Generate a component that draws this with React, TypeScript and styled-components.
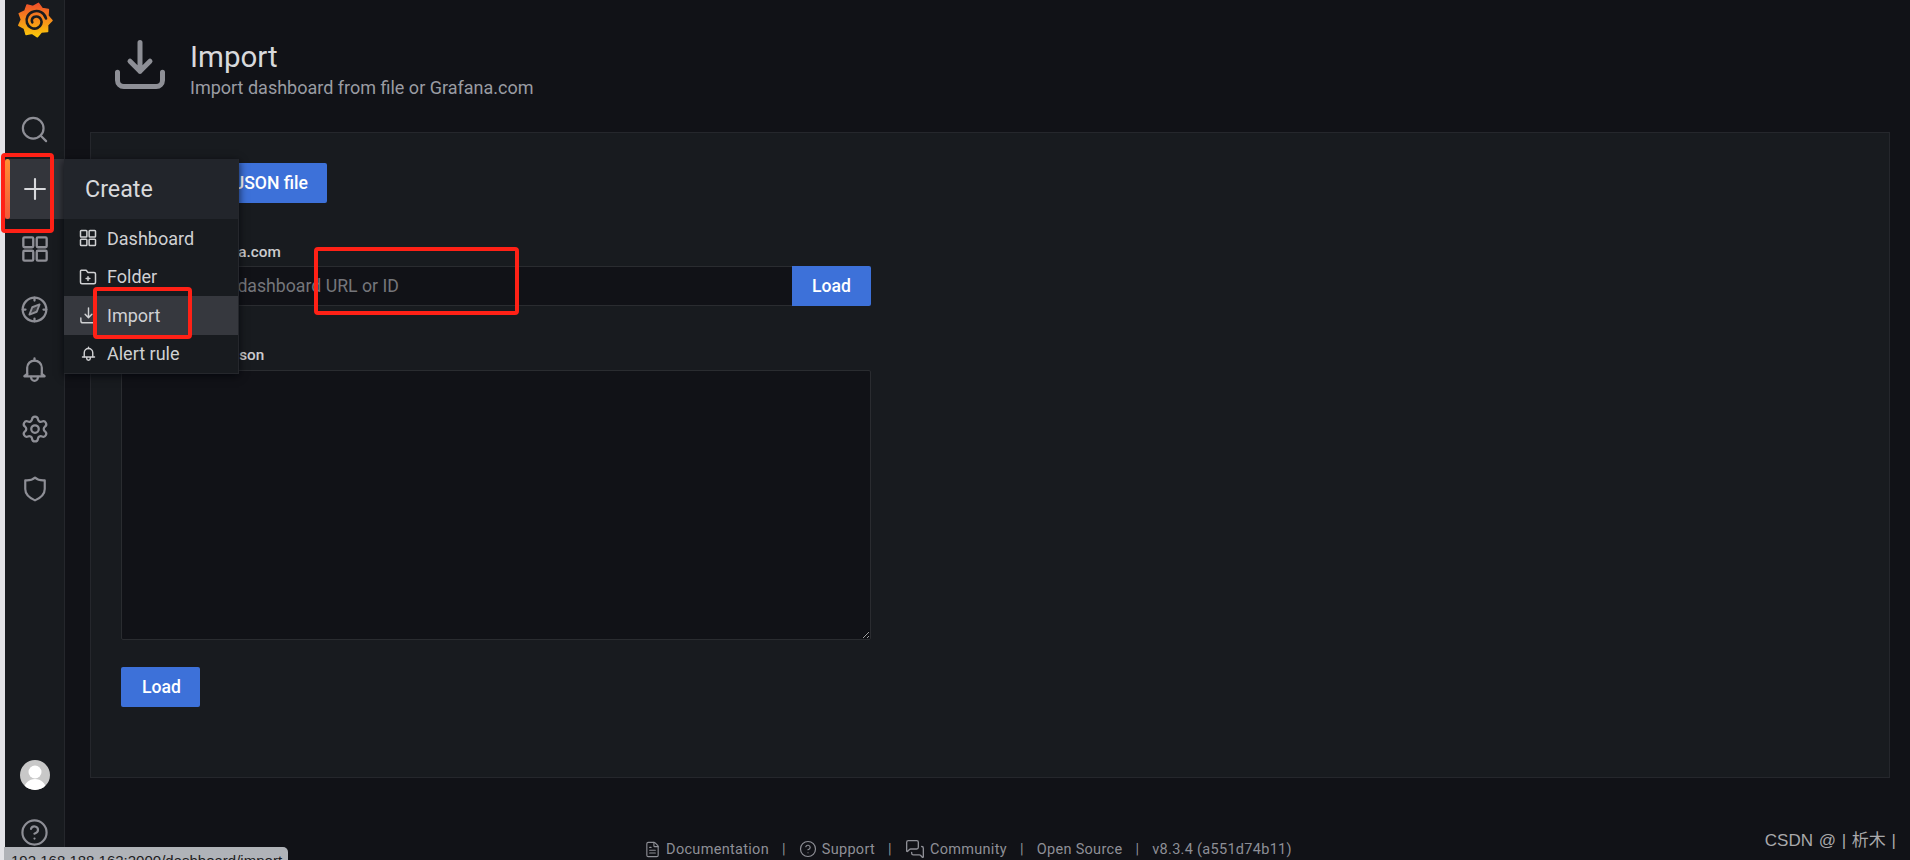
import React from "react";
import styled, { createGlobalStyle } from "styled-components";
import { Search, Plus, Settings, HelpCircle, MessagesSquare, FileText, Upload } from "lucide-react";

const GlobalStyle = createGlobalStyle`
  html, body {
    margin: 0;
    padding: 0;
    background: #111217;
    overflow: hidden;
  }
  * {
    box-sizing: border-box;
  }
`;

const Page = styled.div`
  position: relative;
  display: flex;
  width: 1910px;
  height: 860px;
  overflow: hidden;
  background: #111217;
  font-family: Roboto, "Liberation Sans", sans-serif;
  color: #d0d1d3;
`;

const Strip = styled.div`
  width: 5px;
  background: #e3e3e7;
`;

const Sidebar = styled.nav`
  width: 60px;
  display: flex;
  flex-direction: column;
  background: #181b1f;
  border-right: 1px solid #25272c;
`;

const LogoSlot = styled.div`
  height: 99px;
  display: flex;
  justify-content: center;
  padding-top: 2px;
`;

const NavRow = styled.div<{ $active?: boolean }>`
  position: relative;
  height: 60px;
  display: flex;
  align-items: center;
  justify-content: center;
  color: #8e8f96;
  background: ${(p) => (p.$active ? "#33353b" : "transparent")};
  ${(p) => (p.$active ? "color: #d8d9dc;" : "")}
`;

const ActiveBar = styled.span`
  position: absolute;
  left: 0;
  top: 0;
  bottom: 0;
  width: 5px;
  border-radius: 3px;
  background: linear-gradient(#ff8f33, #f2583a);
`;

const BottomNav = styled.div`
  margin-top: auto;
  display: flex;
  flex-direction: column;
`;

const BottomRow = styled.div<{ $height: number }>`
  height: ${(p) => p.$height}px;
  display: flex;
  align-items: center;
  justify-content: center;
  color: #8e8f96;
`;

const Avatar = styled.div`
  width: 30px;
  height: 30px;
  border-radius: 50%;
  overflow: hidden;
  background: #c8c8c8;
`;

const Main = styled.main`
  flex: 1;
  display: flex;
  flex-direction: column;
  padding: 0 20px 0 25px;
`;

const Header = styled.header`
  height: 132px;
  display: flex;
  align-items: flex-start;
  gap: 25px;
  padding: 40px 0 0 25px;
`;

const HeaderIcon = styled.div`
  width: 50px;
  height: 50px;
  color: #8e8f96;
`;

const Title = styled.h1`
  margin: 0;
  font-size: 29.5px;
  font-weight: 400;
  line-height: 34px;
  color: #d8d9dc;
`;

const Subtitle = styled.div`
  font-size: 18px;
  line-height: 20px;
  color: #9a9ca3;
  margin-top: 4px;
`;

const Panel = styled.section`
  height: 646px;
  background: #181b1f;
  border: 1px solid #25272c;
  padding: 30px;
`;

const Form = styled.div`
  width: 750px;
  display: flex;
  flex-direction: column;
  align-items: flex-start;
`;

const Button = styled.button<{ $width: number; $top?: number }>`
  width: ${(p) => p.$width}px;
  height: 40px;
  margin-top: ${(p) => p.$top ?? 0}px;
  display: flex;
  align-items: center;
  justify-content: flex-end;
  gap: 8px;
  padding: 0 19px;
  border: none;
  border-radius: 2px;
  background: #3d71d9;
  color: #fff;
  font-family: inherit;
  font-size: 17.6px;
  font-weight: 500;
`;

const Label = styled.label<{ $top: number }>`
  display: block;
  align-self: stretch;
  margin-top: ${(p) => p.$top}px;
  font-size: 15.3px;
  font-weight: 500;
  line-height: 20px;
  color: #ccccce;
`;

const InputRow = styled.div`
  align-self: stretch;
  display: flex;
  height: 40px;
  margin-top: 4px;
`;

const Input = styled.input`
  flex: 1;
  min-width: 0;
  padding: 0 0 0 9px;
  background: #111217;
  border: 1px solid #2a2c30;
  border-right: none;
  border-radius: 2px 0 0 2px;
  font-family: inherit;
  font-size: 17.7px;
  outline: none;
  &::placeholder {
    color: #75767b;
  }
`;

const LoadAddon = styled(Button)`
  width: 79px;
  height: 40px;
  justify-content: center;
  padding: 0;
  border-radius: 0 2px 2px 0;
`;

const Textarea = styled.textarea`
  align-self: stretch;
  display: block;
  height: 270px;
  margin-top: 5px;
  background: #111217;
  border: 1px solid #2a2c30;
  border-radius: 2px;
  outline: none;
  resize: vertical;
  color-scheme: dark;
`;

const Footer = styled.footer`
  display: flex;
  align-items: center;
  justify-content: center;
  height: 20px;
  margin-top: 61px;
  padding-right: 44px;
  font-size: 14.5px;
  letter-spacing: 0.3px;
  color: #8e8f96;
`;

const FooterItem = styled.span`
  display: flex;
  align-items: center;
  gap: 5px;
  white-space: nowrap;
`;

const Separator = styled.span`
  margin: 0 13px;
`;

const Menu = styled.div`
  position: absolute;
  left: 64px;
  top: 159px;
  width: 175px;
  background: #181b1f;
  border: 1px solid #25272c;
  border-top: none;
  border-left: none;
  box-shadow: 0 2px 8px rgba(1, 4, 9, 0.75);
`;

const MenuHeader = styled.div`
  height: 60px;
  display: flex;
  align-items: center;
  padding-left: 21px;
  background: #22252b;
  font-size: 23.3px;
  font-weight: 400;
  color: #d8d9dc;
`;

const MenuItem = styled.div<{ $active?: boolean }>`
  height: 38.5px;
  display: flex;
  align-items: center;
  gap: 10px;
  padding-left: 15px;
  font-size: 18px;
  color: #d0d1d3;
  background: ${(p) => (p.$active ? "#36383e" : "transparent")};
`;

const MenuIconSlot = styled.span`
  width: 18px;
  display: flex;
  justify-content: center;
`;

const Marker = styled.div<{ $x: number; $y: number; $w: number; $h: number }>`
  position: absolute;
  left: ${(p) => p.$x}px;
  top: ${(p) => p.$y}px;
  width: ${(p) => p.$w}px;
  height: ${(p) => p.$h}px;
  border: 4px solid #ff2116;
  border-radius: 4px;
  pointer-events: none;
`;

const StatusBubble = styled.div`
  position: absolute;
  left: 4px;
  bottom: 0;
  width: 284px;
  height: 13px;
  padding: 5px 0 0 7px;
  overflow: hidden;
  background: #b0b3b8;
  border-top-right-radius: 5px;
  font-family: "Liberation Sans", sans-serif;
  font-size: 15px;
  line-height: 17px;
  white-space: nowrap;
  color: #1c1c1e;
`;

const Watermark = styled.div`
  position: absolute;
  right: 14px;
  bottom: 9px;
  font-family: "Liberation Sans", "Noto Sans CJK SC", sans-serif;
  font-size: 17px;
  line-height: 20px;
  word-spacing: 1px;
  color: #a9a9ab;
  white-space: nowrap;
`;

const Icon: React.FC<{ size: number; width?: number; children: React.ReactNode }> = ({
  size,
  width = 2,
  children,
}) => (
  <svg
    width={size}
    height={size}
    viewBox="0 0 24 24"
    fill="none"
    stroke="currentColor"
    strokeWidth={width}
    strokeLinecap="round"
    strokeLinejoin="round"
  >
    {children}
  </svg>
);

const GridIcon = ({ size }: { size: number }) => (
  <Icon size={size}>
    <rect x="2" y="2" width="8.5" height="8.5" rx="1" />
    <rect x="13.5" y="2" width="8.5" height="8.5" rx="1" />
    <rect x="2" y="13.5" width="8.5" height="8.5" rx="1" />
    <rect x="13.5" y="13.5" width="8.5" height="8.5" rx="1" />
  </Icon>
);

const CompassIcon = ({ size }: { size: number }) => (
  <Icon size={size}>
    <circle cx="12" cy="12" r="10.5" />
    <path d="M16.5 7.5 10 10 7.5 16.5 14 14Z" strokeWidth="1.7" fill="currentColor" fillOpacity="0.3" />
    <path d="M12 1.5v2.5M12 20v2.5M1.5 12H4M20 12h2.5" />
  </Icon>
);

const BellIcon = ({ size }: { size: number }) => (
  <Icon size={size}>
    <path d="M5.5 17v-6.500a6.500 6.500 0 0 1 13 0V17" />
    <path d="M3 18h18l-2.500-2M3 18l2.500-2M12 2v2" />
    <path d="M9 18.500v.5a3 3 0 0 0 6 0v-.5" />
  </Icon>
);

const ShieldIcon = ({ size }: { size: number }) => (
  <Icon size={size}>
    <path d="M12 1.500c2 1.800 5.500 2.800 9 2.500v8c0 5-3.800 8.200-9 10.500C6.800 20.200 3 17 3 12V4c3.500.3 7-.7 9-2.500Z" />
  </Icon>
);

const ImportIcon = ({ size, width = 2 }: { size: number; width?: number }) => (
  <Icon size={size} width={width}>
    <path d="M12 1.200V15M7.200 10.200l4.800 4.800 4.800-4.800" />
    <path d="M1.200 15.500v3.800a3 3 0 0 0 3 3h15.600a3 3 0 0 0 3-3v-3.800" />
  </Icon>
);

const FolderPlusIcon = ({ size }: { size: number }) => (
  <Icon size={size}>
    <path d="M3 3h6.500l2.500 3h8a2 2 0 0 1 2 2v11a2 2 0 0 1-2 2H4a2 2 0 0 1-2-2V4a1 1 0 0 1 1-1Z" />
    <path d="M12 11.500v5M9.500 14h5" />
  </Icon>
);

const SmallBell = ({ size }: { size: number }) => (
  <Icon size={size}>
    <path d="M6 16.500V11a6 6 0 0 1 12 0v5.500" />
    <path d="M3.500 17h17M12 3v2M9.500 18v1a2.500 2.500 0 0 0 5 0v-1" />
  </Icon>
);

// gear outline of the logo, nine blunt teeth
const logoOutline = Array.from({ length: 18 }, (_, i) => {
  const a = ((i * 20 - 78) * Math.PI) / 180;
  const r = i % 2 === 0 ? 17 : 13.6;
  return `${(18 + r * Math.cos(a)).toFixed(1)},${(18 + r * Math.sin(a)).toFixed(1)}`;
}).join(" ");

const GrafanaLogo = () => (
  <svg width="36" height="36" viewBox="0 0 36 36">
    <defs>
      <linearGradient id="logoFill" x1="0" y1="0" x2="0" y2="1">
        <stop offset="0" stopColor="#ee4f2a" />
        <stop offset="1" stopColor="#fbca0a" />
      </linearGradient>
    </defs>
    <polygon points={logoOutline} fill="url(#logoFill)" stroke="url(#logoFill)" strokeWidth="1.5" strokeLinejoin="round" />
    <path
      d="M29 16.500C27.500 10.500 21.500 8 16.500 9.500 11 11 8.500 16.500 10 21c1.500 4.500 6.500 6.800 10.500 5 3.500-1.500 5-5.500 3.500-8.500-1.300-2.700-4.500-3.800-7-2.500-2 1-2.800 3.500-1.700 5.300"
      fill="none"
      stroke="#181b1f"
      strokeWidth="2.6"
      strokeLinecap="round"
    />
  </svg>
);

const AvatarImage = () => (
  <svg width="30" height="30" viewBox="0 0 30 30">
    <circle cx="15" cy="12" r="6.500" fill="#fff" />
    <path d="M4 30c0-7 5-11 11-11s11 4 11 11Z" fill="#fff" />
  </svg>
);

const menuItems = [
  { label: "Dashboard", icon: <GridIcon size={18} /> },
  { label: "Folder", icon: <FolderPlusIcon size={18} /> },
  { label: "Import", icon: <ImportIcon size={17} />, active: true },
  { label: "Alert rule", icon: <SmallBell size={17} /> },
];

const markers = [
  { x: 1, y: 153, w: 53, h: 80 },
  { x: 93, y: 287, w: 99, h: 52 },
  { x: 314, y: 247, w: 205, h: 68 },
];

const App: React.FC = () => {
  return (
    <>
      <GlobalStyle />
      <Page>
        <Strip />
        <Sidebar>
          <LogoSlot>
            <GrafanaLogo />
          </LogoSlot>
          <NavRow>
            <Search size={31} strokeWidth={1.7} />
          </NavRow>
          <NavRow $active>
            <ActiveBar />
            <Plus size={34} strokeWidth={1.5} />
          </NavRow>
          <NavRow>
            <GridIcon size={28} />
          </NavRow>
          <NavRow>
            <CompassIcon size={27} />
          </NavRow>
          <NavRow>
            <BellIcon size={27} />
          </NavRow>
          <NavRow>
            <Settings size={30} strokeWidth={1.8} />
          </NavRow>
          <NavRow>
            <ShieldIcon size={26} />
          </NavRow>
          <BottomNav>
            <BottomRow $height={58}>
              <Avatar>
                <AvatarImage />
              </Avatar>
            </BottomRow>
            <BottomRow $height={56}>
              <HelpCircle size={29} strokeWidth={1.8} />
            </BottomRow>
          </BottomNav>
        </Sidebar>
        <Main>
          <Header>
            <HeaderIcon>
              <ImportIcon size={50} width={2.4} />
            </HeaderIcon>
            <div>
              <Title>Import</Title>
              <Subtitle>Import dashboard from file or Grafana.com</Subtitle>
            </div>
          </Header>
          <Panel>
            <Form>
              <Button $width={206}>
                <Upload size={16} />
                Upload JSON file
              </Button>
              <Label $top={39}>Import via grafana.com</Label>
              <InputRow>
                <Input placeholder="Grafana.com dashboard URL or ID" />
                <LoadAddon $width={79}>Load</LoadAddon>
              </InputRow>
              <Label $top={39}>Import via panel json</Label>
              <Textarea />
              <Button $width={79} $top={27}>
                Load
              </Button>
            </Form>
          </Panel>
          <Footer>
            <FooterItem>
              <FileText size={17} strokeWidth={1.6} />
              Documentation
            </FooterItem>
            <Separator>|</Separator>
            <FooterItem>
              <HelpCircle size={18} strokeWidth={1.6} />
              Support
            </FooterItem>
            <Separator>|</Separator>
            <FooterItem>
              <MessagesSquare size={20} strokeWidth={1.6} />
              Community
            </FooterItem>
            <Separator>|</Separator>
            <FooterItem>Open Source</FooterItem>
            <Separator>|</Separator>
            <FooterItem>v8.3.4 (a551d74b11)</FooterItem>
          </Footer>
        </Main>
        <Menu>
          <MenuHeader>Create</MenuHeader>
          {menuItems.map((item) => (
            <MenuItem key={item.label} $active={item.active}>
              <MenuIconSlot>{item.icon}</MenuIconSlot>
              {item.label}
            </MenuItem>
          ))}
        </Menu>
        {markers.map((m) => (
          <Marker key={m.x} $x={m.x} $y={m.y} $w={m.w} $h={m.h} />
        ))}
        <StatusBubble>192.168.188.162:2000/dashboard/import</StatusBubble>
        <Watermark>CSDN @ | 析木 |</Watermark>
      </Page>
    </>
  );
};

export default App;
